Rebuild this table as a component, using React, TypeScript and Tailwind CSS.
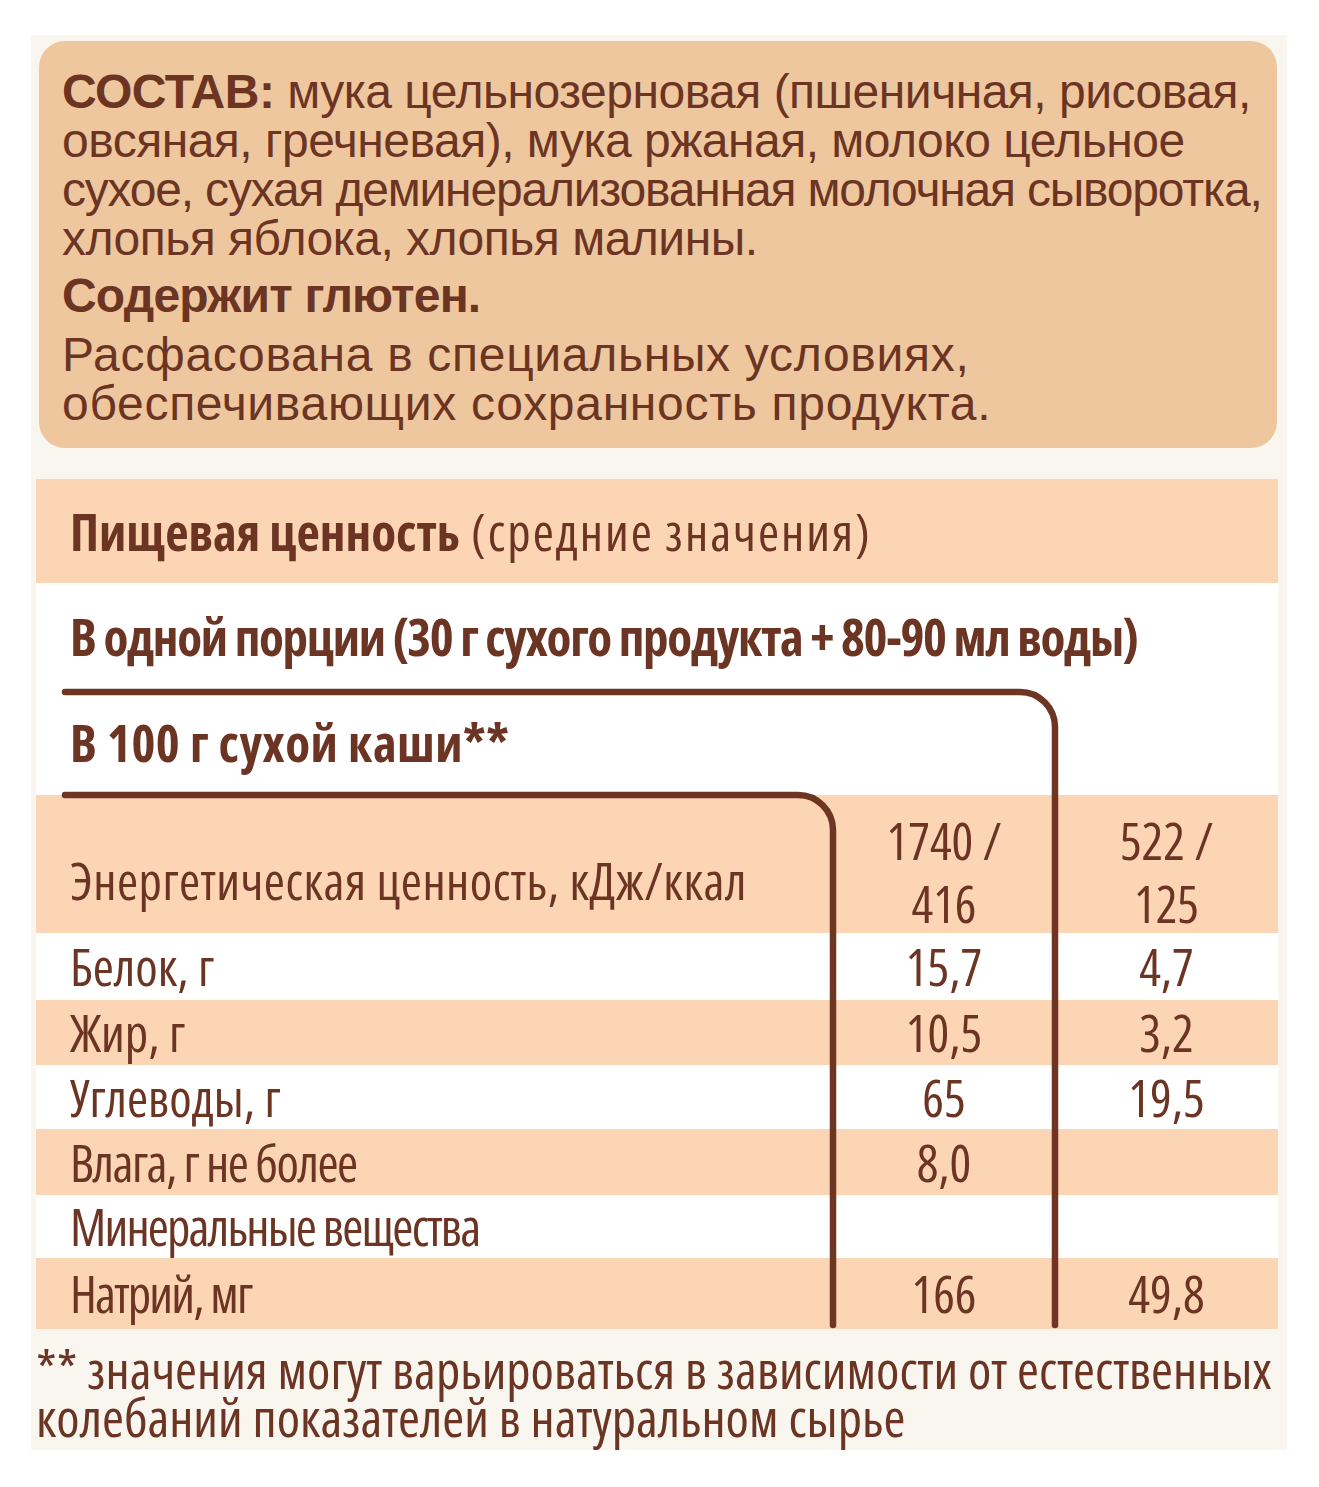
const brown = "text-[#6b3423]";
const peach = "bg-[#fcd5b5]";

const rows = [
  { label: "Белок, г", a: "15,7", b: "4,7", cls: "h-[67px] bg-white", tr: "" },
  { label: "Жир, г", a: "10,5", b: "3,2", cls: `h-[65px] ${peach}`, tr: "" },
  { label: "Углеводы, г", a: "65", b: "19,5", cls: "h-[64px] bg-white", tr: "" },
  { label: "Влага, г не более", a: "8,0", b: "", cls: `h-[66px] ${peach}`, tr: "tracking-[-1.5px]" },
  { label: "Минеральные вещества", a: "", b: "", cls: "h-[63px] bg-white", tr: "tracking-[-1.8px]" },
  { label: "Натрий, мг", a: "166", b: "49,8", cls: `h-[71px] ${peach}`, tr: "tracking-[-1.8px]" },
];

function Brackets() {
  // brown bracket lines that sit over the table rows
  return (
    <svg
      className="absolute inset-0 pointer-events-none"
      width="1242"
      height="850"
      viewBox="0 0 1242 850"
      fill="none"
    >
      <path d="M29 213 H984 A35 35 0 0 1 1019 248 V846" stroke="#6e3522" strokeWidth="6.5" strokeLinecap="round" />
      <path d="M29 316 H762 A35 35 0 0 1 797 351 V846" stroke="#6e3522" strokeWidth="6.5" strokeLinecap="round" />
    </svg>
  );
}

export default function App() {
  return (
    <div className="bg-white w-[1319px] h-[1487px] pt-[35px] pl-[31px]">
      <div className="w-[1256px] h-[1415px] bg-[#f9f6f0] pt-[6px] flex flex-col">
        {/* ///////// COMPOSITION BOX ///////// */}
        <div
          className={`ml-[8px] w-[1238px] h-[407px] rounded-[26px] bg-[#efc79f] pl-[23px] pt-[26px] ${brown} text-[48px] leading-[49px] whitespace-nowrap [font-family:'Liberation_Sans',Arial,sans-serif]`}
        >
          <p className="tracking-[-0.5px]">
            <span className="font-bold">СОСТАВ:</span> мука цельнозерновая (пшеничная, рисовая,
            <br />
            овсяная, гречневая), мука ржаная, молоко цельное
            <br />
            <span className="tracking-[-1.2px]">сухое, сухая деминерализованная молочная сыворотка,</span>
            <br />
            хлопья яблока, хлопья малины.
          </p>
          <p className="font-bold mt-[8px] tracking-[-0.8px]">Содержит глютен.</p>
          <p className="mt-[10px] tracking-[0.7px]">
            Расфасована в специальных условиях,
            <br />
            обеспечивающих сохранность продукта.
          </p>
        </div>

        {/* ///////// NUTRITION TABLE ///////// */}
        <div
          className={`relative mt-[31px] ml-[5px] w-[1242px] ${brown} text-[51px] leading-none font-stretch-condensed [font-family:'Open_Sans',sans-serif]`}
        >
          <div className={`h-[104px] ${peach} flex items-center pl-[34px] whitespace-nowrap`}>
            <span className="font-bold">Пищевая ценность</span>
            <span className="tracking-[2px]">&nbsp;(средние значения)</span>
          </div>
          <div className="h-[107px] bg-white flex items-center pl-[34px] font-bold whitespace-nowrap tracking-[-1.3px]">
            В одной порции (30 г сухого продукта + 80-90 мл воды)
          </div>
          <div className="h-[105px] bg-white flex items-center pl-[34px] font-bold whitespace-nowrap tracking-[0.5px]">
            В 100 г сухой каши**
          </div>
          <div className={`h-[138px] ${peach} grid grid-cols-[797px_222px_223px] items-center`}>
            <div className="pl-[34px] pt-[30px] whitespace-nowrap tracking-[0.5px]">
              Энергетическая ценность, кДж/ккал
            </div>
            <div className="text-center leading-[63px] pt-[14px]">
              1740 /
              <br />
              416
            </div>
            <div className="text-center leading-[63px] pt-[14px]">
              522 /
              <br />
              125
            </div>
          </div>
          {rows.map((r) => (
            <div key={r.label} className={`grid grid-cols-[797px_222px_223px] items-center ${r.cls}`}>
              <div className={`pl-[34px] whitespace-nowrap ${r.tr}`}>{r.label}</div>
              <div className="text-center">{r.a}</div>
              <div className="text-center">{r.b}</div>
            </div>
          ))}
          <Brackets />
        </div>

        {/* ///////// FOOTNOTE ///////// */}
        <div
          className={`ml-[5px] mt-[16px] ${brown} text-[53px] leading-[48px] whitespace-nowrap font-stretch-condensed [font-family:'Open_Sans',sans-serif]`}
        >
          ** значения могут варьироваться в зависимости от естественных
          <br />
          колебаний показателей в натуральном сырье
        </div>
      </div>
    </div>
  );
}
